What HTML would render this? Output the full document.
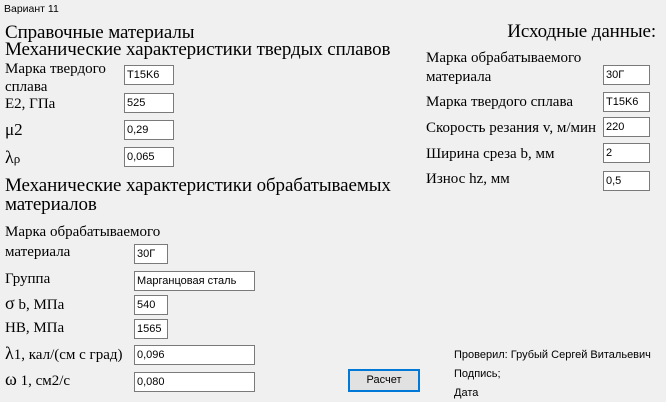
<!DOCTYPE html>
<html><head><meta charset="utf-8"><style>
body{margin:0;width:666px;height:402px;background:#f0f0f0;position:relative;overflow:hidden;font-family:"Liberation Serif","DejaVu Serif",serif;color:#000}
.a{position:absolute;white-space:nowrap}
.s{font-family:"Liberation Sans","DejaVu Sans",sans-serif;font-size:11px}
.h{font-size:19px;line-height:19px;letter-spacing:-0.1px}
.l{font-size:15px;line-height:17px}
.i{position:absolute;background:#fff;border:1px solid #7a7a7a;box-sizing:border-box;height:20px;font-family:"Liberation Sans",sans-serif;font-size:11px;line-height:18px;padding-left:2px}
</style></head><body>
<div class="a s" style="left:4px;top:3px;font-size:10.5px">Вариант 11</div>
<div class="a h" style="left:5px;top:23px">Справочные материалы</div>
<div class="a h" style="left:5px;top:40px">Механические характеристики твердых сплавов</div>
<div class="a l" style="left:5px;top:61px">Марка твердого</div>
<div class="a l" style="left:5px;top:79px">сплава</div>
<div class="a l" style="left:5px;top:96px">E2, ГПа</div>
<div class="a l" style="left:5px;top:121px;font-size:17px">μ2</div>
<div class="a l" style="left:5px;top:149px"><span style="font-size:18px">λ</span><span style="font-size:13px">ρ</span></div>
<div class="i" style="left:124px;top:65px;width:50px">T15K6</div>
<div class="i" style="left:124px;top:93px;width:50px">525</div>
<div class="i" style="left:124px;top:120px;width:50px">0,29</div>
<div class="i" style="left:124px;top:147px;width:50px">0,065</div>
<div class="a h" style="left:5px;top:176px">Механические характеристики обрабатываемых</div>
<div class="a h" style="left:5px;top:195px">материалов</div>
<div class="a l" style="left:5px;top:224px">Марка обрабатываемого</div>
<div class="a l" style="left:5px;top:244px">материала</div>
<div class="a l" style="left:5px;top:271px">Группа</div>
<div class="a l" style="left:5px;top:295px"><span style="font-size:18px">σ</span> b, МПа</div>
<div class="a l" style="left:5px;top:320px">HB, МПа</div>
<div class="a l" style="left:5px;top:345px"><span style="font-size:18px">λ</span>1, кал/(см с град)</div>
<div class="a l" style="left:5px;top:371px"><span style="font-size:18px">ω</span> 1, см2/с</div>
<div class="i" style="left:134px;top:244px;width:34px">30Г</div>
<div class="i" style="left:134px;top:271px;width:121px">Марганцовая сталь</div>
<div class="i" style="left:134px;top:295px;width:34px">540</div>
<div class="i" style="left:134px;top:319px;width:34px">1565</div>
<div class="i" style="left:134px;top:345px;width:121px">0,096</div>
<div class="i" style="left:134px;top:372px;width:121px">0,080</div>
<div class="a h" style="right:10px;top:22px">Исходные данные:</div>
<div class="a l" style="left:426px;top:50px">Марка обрабатываемого</div>
<div class="a l" style="left:426px;top:69px">материала</div>
<div class="a l" style="left:426px;top:94px">Марка твердого сплава</div>
<div class="a l" style="left:426px;top:120px">Скорость резания v, м/мин</div>
<div class="a l" style="left:426px;top:146px">Ширина среза b, мм</div>
<div class="a l" style="left:426px;top:171px">Износ hz, мм</div>
<div class="i" style="left:603px;top:65px;width:47px">30Г</div>
<div class="i" style="left:603px;top:92px;width:47px">T15K6</div>
<div class="i" style="left:603px;top:117px;width:47px">220</div>
<div class="i" style="left:603px;top:143px;width:47px">2</div>
<div class="i" style="left:603px;top:171px;width:47px">0,5</div>
<div class="a s" style="left:348px;top:369px;width:72px;height:23px;box-sizing:border-box;border:2px solid #0078d7;background:#e1e1e1;text-align:center;line-height:19px">Расчет</div>
<div class="a s" style="left:454px;top:349px">Проверил: Грубый Сергей Витальевич</div>
<div class="a s" style="left:454px;top:368px">Подпись;</div>
<div class="a s" style="left:454px;top:387px">Дата</div>
</body></html>
